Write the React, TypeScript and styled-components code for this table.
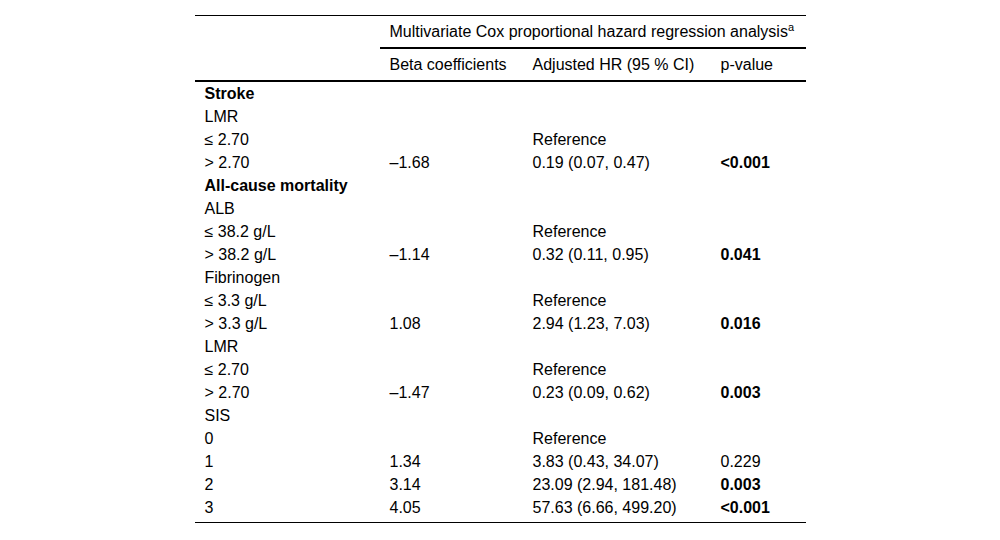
import React from "react";
import styled, { createGlobalStyle } from "styled-components";

const Global = createGlobalStyle`
  html, body { margin: 0; padding: 0; background: #fff; }
  body { font-family: "Liberation Sans", Arial, sans-serif; color: #000; }
`;

const Page = styled.div`
  padding-top: 15px;
  display: flex;
  justify-content: center;
`;

const Table = styled.table`
  width: 611px;
  border-collapse: separate;
  border-spacing: 0;
  border-top: 1px solid #000;
  border-bottom: 1px solid #000;
  font-size: 16px;
  table-layout: fixed;
`;

const Col = styled.col<{ $w: number }>`
  width: ${(p) => p.$w}px;
`;

const HeadCell = styled.th<{ $rule?: boolean }>`
  height: 31px;
  padding: 0 10px;
  text-align: left;
  font-weight: 400;
  vertical-align: middle;
  border-bottom: ${(p) => (p.$rule ? "2px solid #000" : "none")};
  white-space: nowrap;
`;

const Sup = styled.sup`
  font-size: 11px;
  line-height: 0;
`;

const Row = styled.tr<{ $last?: boolean }>`
  height: ${(p) => (p.$last ? 26 : 23)}px;
`;

const Cell = styled.td<{ $bold?: boolean; $last?: boolean }>`
  padding: ${(p) => (p.$last ? "0 10px 3px" : "0 10px")};
  vertical-align: middle;
  font-weight: ${(p) => (p.$bold ? 700 : 400)};
  white-space: nowrap;
  line-height: 18px;
`;

type R = {
  label: string;
  beta?: string;
  hr?: string;
  p?: string;
  boldLabel?: boolean;
  boldP?: boolean;
};

const rows: R[] = [
  { label: "Stroke", boldLabel: true },
  { label: "LMR" },
  { label: "≤ 2.70", hr: "Reference" },
  { label: "> 2.70", beta: "–1.68", hr: "0.19 (0.07, 0.47)", p: "<0.001", boldP: true },
  { label: "All-cause mortality", boldLabel: true },
  { label: "ALB" },
  { label: "≤ 38.2 g/L", hr: "Reference" },
  { label: "> 38.2 g/L", beta: "–1.14", hr: "0.32 (0.11, 0.95)", p: "0.041", boldP: true },
  { label: "Fibrinogen" },
  { label: "≤ 3.3 g/L", hr: "Reference" },
  { label: "> 3.3 g/L", beta: "1.08", hr: "2.94 (1.23, 7.03)", p: "0.016", boldP: true },
  { label: "LMR" },
  { label: "≤ 2.70", hr: "Reference" },
  { label: "> 2.70", beta: "–1.47", hr: "0.23 (0.09, 0.62)", p: "0.003", boldP: true },
  { label: "SIS" },
  { label: "0", hr: "Reference" },
  { label: "1", beta: "1.34", hr: "3.83 (0.43, 34.07)", p: "0.229" },
  { label: "2", beta: "3.14", hr: "23.09 (2.94, 181.48)", p: "0.003", boldP: true },
  { label: "3", beta: "4.05", hr: "57.63 (6.66, 499.20)", p: "<0.001", boldP: true },
];

export default function App() {
  return (
    <>
      <Global />
      <Page>
        <Table>
          <colgroup>
            <Col $w={185} />
            <Col $w={143} />
            <Col $w={188} />
            <Col $w={95} />
          </colgroup>
          <thead>
            <tr>
              <HeadCell />
              <HeadCell colSpan={3} $rule>
                Multivariate Cox proportional hazard regression analysis<Sup>a</Sup>
              </HeadCell>
            </tr>
            <tr>
              <HeadCell $rule />
              <HeadCell $rule>Beta coefficients</HeadCell>
              <HeadCell $rule>Adjusted HR (95 % CI)</HeadCell>
              <HeadCell $rule>p-value</HeadCell>
            </tr>
          </thead>
          <tbody>
            {rows.map((r, i) => {
              const last = i === rows.length - 1;
              return (
                <Row key={i} $last={last}>
                  <Cell $bold={r.boldLabel} $last={last}>{r.label}</Cell>
                  <Cell $last={last}>{r.beta ?? ""}</Cell>
                  <Cell $last={last}>{r.hr ?? ""}</Cell>
                  <Cell $bold={r.boldP} $last={last}>{r.p ?? ""}</Cell>
                </Row>
              );
            })}
          </tbody>
        </Table>
      </Page>
    </>
  );
}
